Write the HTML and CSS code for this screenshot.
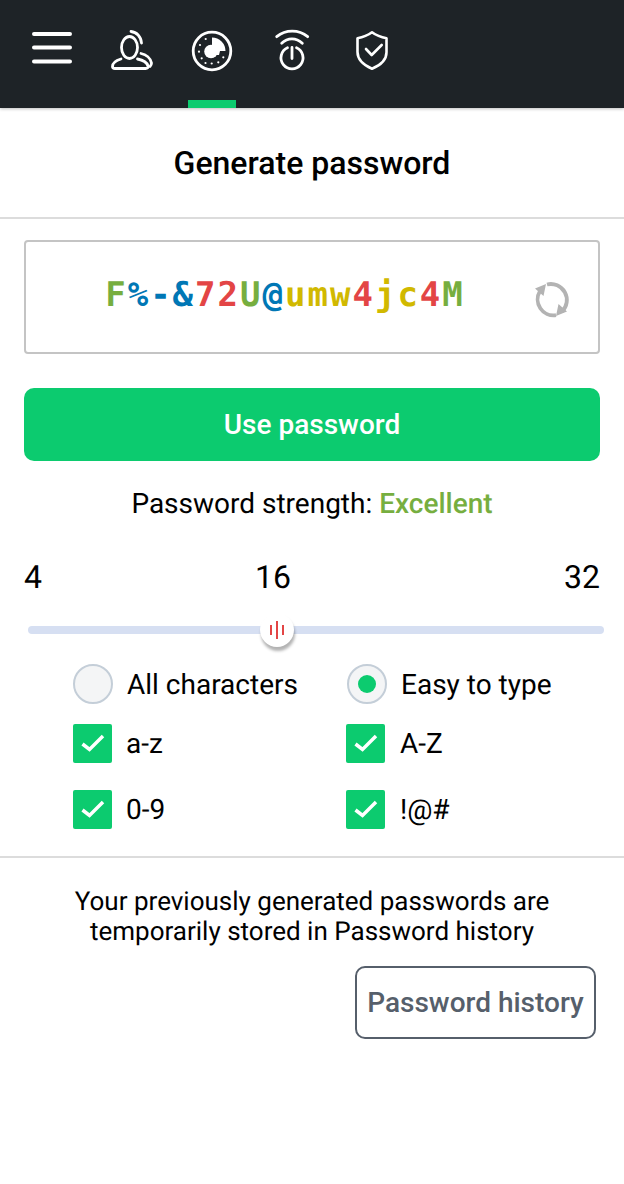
FILE: index.html
```html
<!DOCTYPE html>
<html lang="en">
<head>
    <meta charset="UTF-8">
    <meta name="viewport" content="width=device-width, initial-scale=1.0">
    <title>Generate password</title>
    <link rel="stylesheet" href="styles.css">
</head>
<body>

<div class="topbar">
    <div class="tab">
        <svg class="icon" viewBox="0 0 48 48"><path d="M6 7h36M6 20.500h36M6 34.500h36" fill="none" stroke="#fff" stroke-width="4" stroke-linecap="round"/></svg>
    </div>
    <div class="tab">
        <svg class="icon" viewBox="0 0 48 48"><g fill="none" stroke="#fff" stroke-width="2.800" stroke-linecap="round" stroke-linejoin="round"><ellipse cx="21.500" cy="20.500" rx="8" ry="11"/><path d="M13 32c-5 1.500-8.500 4-8.500 7.500 0 1.500 1 2 2.500 2h30.500c2 0 3-1 2.500-2.500-1-3.500-5-6-10.500-7"/><path d="M23 4.500c5.500.5 10 5 10.500 11.500"/><path d="M33 26.500c5 1 9.500 4.500 10.500 9.500 0 1.500-.5 2.500-1.500 3.500"/></g></svg>
    </div>
    <div class="tab active">
        <svg class="icon" viewBox="0 0 48 48"><circle cx="24" cy="24" r="18.800" fill="none" stroke="#fff" stroke-width="2.800"/><path d="M24 24V10.500A13.500 13.500 0 0 1 37.500 24z" fill="#fff"/><circle cx="23" cy="24.500" r="6.800" fill="#fff"/><path d="M24 24h8l-1 4h-5z" fill="#fff"/><g fill="#fff"><circle cx="17.700" cy="12" r="1.100"/><circle cx="12" cy="18" r="1.100"/><circle cx="11" cy="24.700" r="1.100"/><circle cx="13.700" cy="31.300" r="1.100"/><circle cx="17.500" cy="36" r="1.100"/><circle cx="23.700" cy="36.500" r="1.100"/><circle cx="30.300" cy="35.300" r="1.100"/><circle cx="35.300" cy="30.300" r="1.100"/></g></svg>
    </div>
    <div class="tab">
        <svg class="icon" viewBox="0 0 48 48"><g fill="none" stroke="#fff" stroke-width="2.800" stroke-linecap="round"><path d="M19.500 20.800A11 11 0 1 0 28.500 20.800"/><path d="M24 20.500v11M8.700 9.700c9-7.500 22-7.500 31 0M13.700 16.300c6-6 14.500-6 20.600 0"/></g></svg>
    </div>
    <div class="tab">
        <svg class="icon" viewBox="0 0 48 48"><g fill="none" stroke="#fff" stroke-width="2.600" stroke-linecap="round" stroke-linejoin="round"><path d="M24 5.300c4 3 9 5 14.500 6v14c0 8-6 13-14.500 16.500C15.500 38 9.500 33 9.500 25V11.300c5.500-1 10.500-3 14.500-6z"/><path d="M18 22l5.700 6 10-10"/></g></svg>
    </div>
</div>

<h1 class="title">Generate password</h1>

<div class="content">
    <div class="password-box">
        <div class="password"><span class="lt">F</span><span class="sy">%-&amp;</span><span class="nm">72</span><span class="lt">U</span><span class="sy">@</span><span class="lo">umw</span><span class="nm">4</span><span class="lo">jc</span><span class="nm">4</span><span class="lt">M</span></div>
        <svg class="refresh" viewBox="0 0 40 40"><g fill="none" stroke="#b3b3b3" stroke-width="3.800"><path d="M9 11A16 16 0 0 0 25 35.200"/><path d="M16 4.500A16 16 0 0 1 31 31.500"/></g><path d="M15 4L4 8.500l8.500 7.500zM25 36l11-4.500L27.500 24z" fill="#b3b3b3"/></svg>
    </div>

    <button type="button" class="use-button">Use password</button>

    <p class="strength">Password strength: <strong>Excellent</strong></p>

    <div class="range-labels"><span>4</span><span class="current">16</span><span>32</span></div>
    <div class="slider">
        <div class="thumb"><i></i><i class="tall"></i><i></i></div>
    </div>

    <div class="options">
        <label class="option radio-row"><span class="radio"></span>All characters</label>
        <label class="option radio-row"><span class="radio checked"></span>Easy to type</label>
        <label class="option"><span class="check"><svg viewBox="0 0 39 39"><path d="M9.500 20l7 5.500L30 12" fill="none" stroke="#fff" stroke-width="3.500"/></svg></span>a-z</label>
        <label class="option"><span class="check"><svg viewBox="0 0 39 39"><path d="M9.500 20l7 5.500L30 12" fill="none" stroke="#fff" stroke-width="3.500"/></svg></span>A-Z</label>
        <label class="option"><span class="check"><svg viewBox="0 0 39 39"><path d="M9.500 20l7 5.500L30 12" fill="none" stroke="#fff" stroke-width="3.500"/></svg></span>0-9</label>
        <label class="option"><span class="check"><svg viewBox="0 0 39 39"><path d="M9.500 20l7 5.500L30 12" fill="none" stroke="#fff" stroke-width="3.500"/></svg></span>!@#</label>
    </div>
</div>

<div class="history">
    <p>Your previously generated passwords are<br>temporarily stored in Password history</p>
    <div class="history-action"><button type="button" class="history-button">Password history</button></div>
</div>

</body>
</html>
```

FILE: styles.css
```css
* {
    box-sizing: border-box;
}
body {
    font-family: Roboto, "Liberation Sans", sans-serif;
    margin: 0;
    background-color: #fff;
    color: #000;
    height: 1184px;
    overflow: hidden;
    text-rendering: geometricPrecision;
}
.topbar {
    height: 108px;
    background-color: #1e2327;
    display: flex;
    gap: 32px;
    padding-left: 28px;
    box-shadow: 0 1px 3px rgba(0, 0, 0, 0.25);
}
.tab {
    width: 48px;
    height: 108px;
    padding-top: 27px;
}
.tab.active {
    border-bottom: 8px solid #0ccb6f;
}
.icon {
    display: block;
    width: 48px;
    height: 48px;
}
.title {
    height: 111px;
    margin: 0;
    border-bottom: 2px solid #dcdcdc;
    font-size: 32px;
    font-weight: 500;
    line-height: 110px;
    text-align: center;
}
.content {
    padding: 21px 24px 0;
}
.password-box {
    height: 114px;
    border: 2px solid #c4c4c4;
    border-radius: 4px;
    position: relative;
    display: flex;
    align-items: center;
    justify-content: center;
    padding-right: 54px;
}
.password {
    font-family: "DejaVu Sans Mono", monospace;
    font-size: 34px;
    font-weight: bold;
    letter-spacing: 2px;
    margin-bottom: 4px;
}
.lt { color: #76ae3f; }
.sy { color: #0077b5; }
.nm { color: #e34545; }
.lo { color: #d1b900; }
.refresh {
    position: absolute;
    right: 27px;
    top: 38px;
    width: 40px;
    height: 40px;
}
.use-button {
    display: block;
    width: 100%;
    height: 73px;
    margin-top: 34px;
    background-color: #0ccb6f;
    color: #fff;
    border: none;
    border-radius: 10px;
    font-family: inherit;
    font-size: 28px;
    font-weight: 500;
}
.strength {
    margin: 27px 0 0;
    font-size: 28px;
    line-height: 32px;
    text-align: center;
}
.strength strong {
    color: #76ae3f;
    font-weight: 500;
}
.range-labels {
    display: flex;
    margin-top: 38px;
    font-size: 32px;
    line-height: 38px;
}
.range-labels .current {
    margin-left: 213px;
    margin-right: auto;
}
.slider {
    height: 8px;
    margin: 30px -4px 0 4px;
    background-color: #d6dff2;
    border-radius: 4px;
    position: relative;
}
.thumb {
    position: absolute;
    left: 232px;
    top: -13px;
    width: 34px;
    height: 34px;
    background: #fff;
    border-radius: 50%;
    box-shadow: 1px 4px 3px rgba(0, 0, 0, 0.3);
    display: flex;
    align-items: center;
    justify-content: center;
    gap: 4px;
}
.thumb i {
    width: 2px;
    height: 10px;
    background-color: #e34545;
}
.thumb i.tall {
    height: 18px;
}
.options {
    display: grid;
    grid-template-columns: 274px 1fr;
    padding-left: 49px;
    margin-top: 30px;
    font-size: 28px;
}
.option {
    display: flex;
    align-items: center;
    gap: 14px;
    height: 66px;
}
.option.radio-row {
    height: 40px;
    margin-bottom: 6px;
}
.option:nth-child(even) .check {
    margin-left: -1px;
    margin-right: 1px;
}
.radio {
    width: 40px;
    height: 40px;
    border: 2px solid #c4ced8;
    border-radius: 50%;
    background-color: #f4f5f6;
    display: flex;
    align-items: center;
    justify-content: center;
}
.radio.checked::after {
    content: "";
    width: 18px;
    height: 18px;
    border-radius: 50%;
    background-color: #0ccb6f;
}
.check {
    width: 39px;
    height: 39px;
    background-color: #0ccb6f;
    border-radius: 2px;
}
.check svg {
    display: block;
    width: 39px;
    height: 39px;
}
.history {
    margin-top: 14px;
    border-top: 2px solid #dcdcdc;
    padding: 29px 28px 0;
}
.history p {
    margin: 0;
    font-size: 26px;
    line-height: 30px;
    text-align: center;
}
.history-action {
    display: flex;
    justify-content: flex-end;
    margin-top: 19px;
}
.history-button {
    width: 241px;
    height: 73px;
    padding: 0;
    background: #fff;
    color: #565f6b;
    border: 2px solid #565f6b;
    border-radius: 10px;
    font-family: inherit;
    font-size: 28px;
    font-weight: 500;
}
```
